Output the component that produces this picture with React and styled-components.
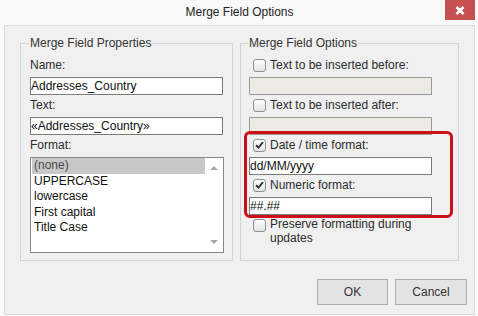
import React from "react";
import styled, { createGlobalStyle } from "styled-components";

const Global = createGlobalStyle`
  html, body { margin: 0; padding: 0; background: #f9f9f9; }
  * { box-sizing: border-box; }
  body { font-family: "Liberation Sans", Arial, sans-serif; font-size: 12px; color: #2b2b2b; }
`;

const Window = styled.div`
  width: 478px;
  height: 316px;
  background: #f9f9f9;
  display: flex;
  flex-direction: column;
  padding: 0 3px 1px 4px;
`;

const TitleBar = styled.div`
  height: 25px;
  display: grid;
  grid-template-columns: 1fr auto 1fr;
  align-items: center;
`;

const Title = styled.div`
  grid-column: 2;
  font-size: 12px;
  color: #222;
  line-height: 14px;
  padding-bottom: 1px;
`;

const CloseButton = styled.button`
  grid-column: 3;
  justify-self: end;
  align-self: start;
  width: 30px;
  height: 20px;
  border: 0;
  padding: 0;
  background: #c75050;
  display: flex;
  align-items: center;
  justify-content: center;
`;

const Panel = styled.div`
  flex: 1;
  border: 1px solid #dcdcdc;
  background: #f0f0f0;
  padding: 10px 15px 9px 15px;
  display: flex;
  flex-direction: column;
`;

const GroupsRow = styled.div`
  display: flex;
  gap: 7px;
  align-items: stretch;
`;

const Group = styled.fieldset`
  margin: 0;
  min-width: 0;
  width: ${(p) => p.$width}px;
  border: 1px solid #d3d3d3;
  padding: 5px 9px 7px ${(p) => p.$padLeft}px;
  display: flex;
  flex-direction: column;
`;

const Legend = styled.legend`
  font-size: 12px;
  line-height: 14px;
  padding: 0 1px;
  margin-left: -1px;
  color: #333;
`;

const Label = styled.div`
  height: 22px;
  padding-bottom: 2px;
  display: flex;
  align-items: center;
  line-height: 14px;
  color: #2b2b2b;
`;

const TextBox = styled.input`
  display: block;
  width: ${(p) => p.$width || 193}px;
  height: 18px;
  border: 1px solid ${(p) => (p.disabled ? "#9a9a9a" : "#7c7c7c")};
  background: ${(p) => (p.disabled ? "#ebeae5" : "#ffffff")};
  padding: 0;
  margin: 0;
  font-family: "Liberation Sans", Arial, sans-serif;
  font-size: 12px;
  color: #111;
  outline: none;
`;

const ListBox = styled.div`
  width: 194px;
  height: 96px;
  border: 1px solid #888;
  background: #fff;
  display: flex;
`;

const Items = styled.div`
  flex: 1;
  padding-left: 1px;
`;

const Item = styled.div`
  height: 15.5px;
  line-height: 15.5px;
  padding-left: 2px;
  font-size: 12px;
  color: ${(p) => (p.$selected ? "#4a4a4a" : "#111")};
  background: ${(p) => (p.$selected ? "#c8c8c8" : "transparent")};
`;

const ScrollTrack = styled.div`
  width: 18px;
  display: flex;
  flex-direction: column;
  justify-content: space-between;
  align-items: center;
  padding: 8px 0 8px;
`;

const Arrow = styled.span`
  width: 0;
  height: 0;
  border-left: 4px solid transparent;
  border-right: 4px solid transparent;
  ${(p) =>
    p.$up
      ? "border-bottom: 4px solid #a8a8a8;"
      : "border-top: 4px solid #a8a8a8;"}
`;

const CheckRow = styled.label`
  height: 22px;
  padding-bottom: 2px;
  display: flex;
  align-items: center;
  gap: 4px;
  line-height: 14px;
  color: #2b2b2b;
`;

const WrapRow = styled.label`
  display: flex;
  align-items: flex-start;
  gap: 4px;
  padding-top: 2px;
  width: 183px;
  line-height: 14px;
  color: #2b2b2b;
`;

const Box = styled.span`
  flex: none;
  width: 13px;
  height: 13px;
  margin-left: 4px;
  margin-top: ${(p) => p.$top || 0}px;
  border: 1px solid #8f8f8f;
  border-radius: 3px;
  background: linear-gradient(#fdfdfd, #e4e4e4);
  display: flex;
  align-items: center;
  justify-content: center;
`;

const Highlight = styled.div`
  position: relative;
  &::after {
    content: "";
    position: absolute;
    top: -4px;
    left: -5px;
    right: -4px;
    bottom: -3px;
    border: 3px solid #cc1016;
    border-radius: 6px;
    pointer-events: none;
  }
`;

const ButtonRow = styled.div`
  margin-top: 18px;
  display: flex;
  justify-content: flex-end;
  gap: 7px;
  padding-right: 0;
  margin-right: -8px;
`;

const Button = styled.button`
  width: ${(p) => p.$width}px;
  height: 26px;
  border: 1px solid #adadad;
  background: #e3e3e3;
  font-family: "Liberation Sans", Arial, sans-serif;
  font-size: 12px;
  color: #333;
  padding: 0;
`;

function Check({ checked, top }) {
  return (
    <Box $top={top}>
      {checked && (
        <svg width="9" height="8" viewBox="0 0 9 8">
          <path d="M1 4.2 L3.4 6.5 L8 1.2" fill="none" stroke="#333" strokeWidth="1.9" />
        </svg>
      )}
    </Box>
  );
}

export default function App() {
  const formats = ["(none)", "UPPERCASE", "lowercase", "First capital", "Title Case"];
  return (
    <>
      <Global />
      <Window>
        <TitleBar>
          <Title>Merge Field Options</Title>
          <CloseButton aria-label="Close">
            <svg width="10" height="9" viewBox="0 0 10 9">
              <path d="M1.5 1 L8.5 8 M8.5 1 L1.5 8" stroke="#fff" strokeWidth="2.6" />
            </svg>
          </CloseButton>
        </TitleBar>
        <Panel>
          <GroupsRow>
            <Group $width={213} $padLeft={9}>
              <Legend>Merge Field Properties</Legend>
              <Label>Name:</Label>
              <TextBox defaultValue="Addresses_Country" />
              <Label>Text:</Label>
              <TextBox defaultValue="«Addresses_Country»" />
              <Label>Format:</Label>
              <ListBox>
                <Items>
                  {formats.map((f, i) => (
                    <Item key={f} $selected={i === 0}>
                      {f}
                    </Item>
                  ))}
                </Items>
                <ScrollTrack>
                  <Arrow $up />
                  <Arrow />
                </ScrollTrack>
              </ListBox>
            </Group>
            <Group $width={219} $padLeft={8}>
              <Legend>Merge Field Options</Legend>
              <CheckRow>
                <Check />
                Text to be inserted before:
              </CheckRow>
              <TextBox $width={183} disabled />
              <CheckRow>
                <Check />
                Text to be inserted after:
              </CheckRow>
              <TextBox $width={183} disabled />
              <Highlight>
                <CheckRow>
                  <Check checked />
                  Date / time format:
                </CheckRow>
                <TextBox $width={183} defaultValue="dd/MM/yyyy" />
                <CheckRow>
                  <Check checked />
                  Numeric format:
                </CheckRow>
                <TextBox $width={183} defaultValue="##.##" />
              </Highlight>
              <WrapRow>
                <Check top={2} />
                <span>Preserve formatting during updates</span>
              </WrapRow>
            </Group>
          </GroupsRow>
          <ButtonRow>
            <Button $width={71}>OK</Button>
            <Button $width={72}>Cancel</Button>
          </ButtonRow>
        </Panel>
      </Window>
    </>
  );
}
